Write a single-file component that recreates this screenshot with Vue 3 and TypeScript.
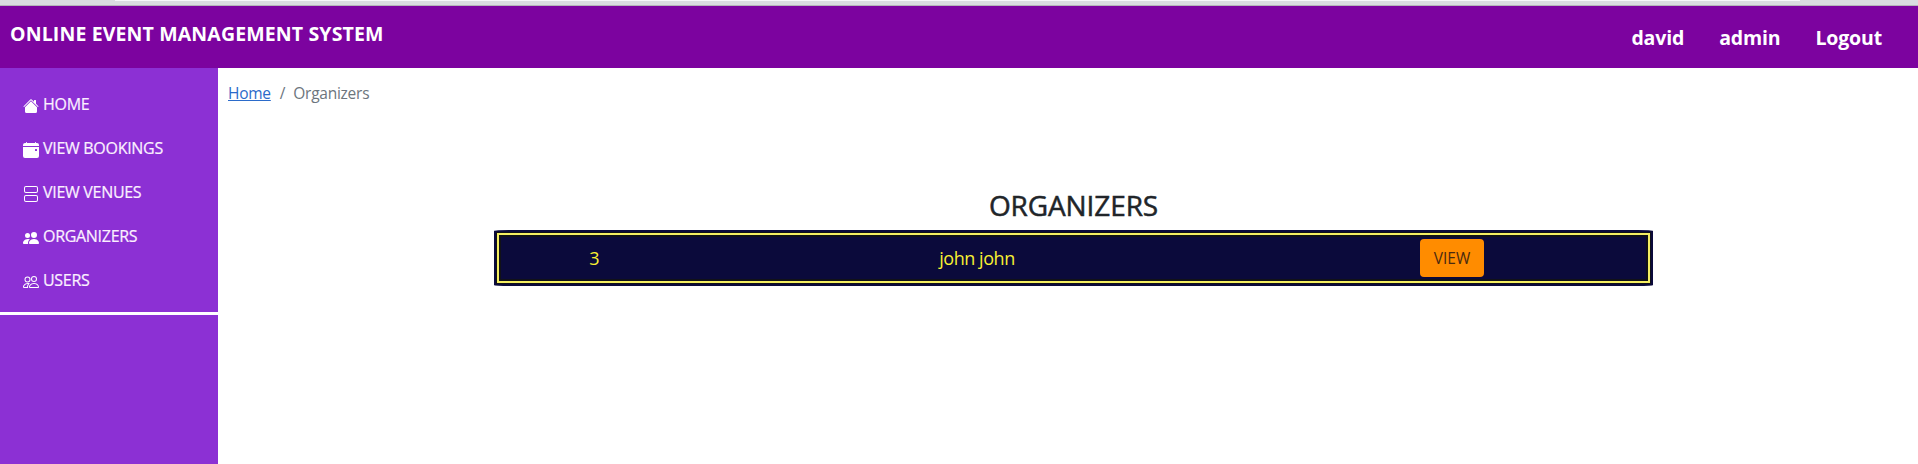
<script setup lang="ts">
interface MenuItem {
  label: string
  paths: string[]
}

const account: string[] = ['david', 'admin', 'Logout']

const menu: MenuItem[] = [
  {
    label: 'HOME',
    paths: [
      'M8.707 1.5a1 1 0 0 0-1.414 0L.646 8.146a.5.5 0 0 0 .708.708L8 2.207l6.646 6.647a.5.5 0 0 0 .708-.708L13 5.793V2.5a.5.5 0 0 0-.5-.5h-1a.5.5 0 0 0-.5.5v1.293z',
      'm8 3.293 6 6V13.500a1.500 1.500 0 0 1-1.500 1.500h-9A1.500 1.500 0 0 1 2 13.500V9.293z',
    ],
  },
  {
    label: 'VIEW BOOKINGS',
    paths: [
      'M4 .5a.5.5 0 0 0-1 0V1H2a2 2 0 0 0-2 2v1h16V3a2 2 0 0 0-2-2h-1V.5a.5.5 0 0 0-1 0V1H4zM16 14V5H0v9a2 2 0 0 0 2 2h12a2 2 0 0 0 2-2m-3.500-7h1a.5.5 0 0 1 .5.5v1a.5.5 0 0 1-.5.5h-1a.5.5 0 0 1-.5-.5v-1a.5.5 0 0 1 .5-.5',
    ],
  },
  {
    label: 'VIEW VENUES',
    paths: [
      'M3 0h10a2 2 0 0 1 2 2v3a2 2 0 0 1-2 2H3a2 2 0 0 1-2-2V2a2 2 0 0 1 2-2m0 1a1 1 0 0 0-1 1v3a1 1 0 0 0 1 1h10a1 1 0 0 0 1-1V2a1 1 0 0 0-1-1zM3 9h10a2 2 0 0 1 2 2v3a2 2 0 0 1-2 2H3a2 2 0 0 1-2-2v-3a2 2 0 0 1 2-2m0 1a1 1 0 0 0-1 1v3a1 1 0 0 0 1 1h10a1 1 0 0 0 1-1v-3a1 1 0 0 0-1-1z',
    ],
  },
  {
    label: 'ORGANIZERS',
    paths: [
      'M7 14s-1 0-1-1 1-4 5-4 5 3 5 4-1 1-1 1zm4-6a3 3 0 1 0 0-6 3 3 0 0 0 0 6',
      'M5.216 14A2.240 2.240 0 0 1 5 13c0-1.355.680-2.750 1.936-3.720A6.300 6.300 0 0 0 5 9c-4 0-5 3-5 4s1 1 1 1z',
      'M4.500 8a2.500 2.500 0 1 0 0-5 2.500 2.500 0 0 0 0 5',
    ],
  },
  {
    label: 'USERS',
    paths: [
      'M15 14s1 0 1-1-1-4-5-4-5 3-5 4 1 1 1 1zm-7.978-1L7 12.996c.001-.264.167-1.030.760-1.720C8.312 10.629 9.282 10 11 10c1.717 0 2.687.630 3.240 1.276.593.690.758 1.457.760 1.720l-.022.004zM11 7a2 2 0 1 0 0-4 2 2 0 0 0 0 4m3-2a3 3 0 1 1-6 0 3 3 0 0 1 6 0',
      'M6.936 9.280a6 6 0 0 0-1.230-.247A7 7 0 0 0 5 9c-4 0-5 3-5 4q0 1 1 1h4.216A2.240 2.240 0 0 1 5 13c0-1.010.377-2.042 1.090-2.904.243-.294.526-.569.846-.816M4.920 10A5.500 5.500 0 0 0 4 13H1c0-.260.164-1.030.760-1.724.545-.636 1.492-1.256 3.160-1.275zM1.500 5.500a3 3 0 1 1 6 0 3 3 0 0 1-6 0m3-2a2 2 0 1 0 0 4 2 2 0 0 0 0-4',
    ],
  },
]

const organizers = [{ id: 3, name: 'john john' }]
</script>

<template>
  <div class="page">
    <div class="chrome"><div class="address"></div></div>
    <header class="topbar">
      <div class="brand">ONLINE EVENT MANAGEMENT SYSTEM</div>
      <nav class="account">
        <a v-for="entry in account" :key="entry">{{ entry }}</a>
      </nav>
    </header>
    <div class="body">
      <aside class="sidebar">
        <ul class="menu">
          <li v-for="item in menu" :key="item.label">
            <svg viewBox="0 0 16 16" fill="currentColor">
              <path v-for="(d, i) in item.paths" :key="i" :d="d" fill-rule="evenodd" />
            </svg>
            <span>{{ item.label }}</span>
          </li>
        </ul>
      </aside>
      <main class="content">
        <nav class="breadcrumb">
          <a class="home">Home</a><span class="slash">/</span><span class="current">Organizers</span>
        </nav>
        <section class="panel">
          <h3>ORGANIZERS</h3>
          <div v-for="row in organizers" :key="row.id" class="frame">
            <div class="row">
              <div class="id">{{ row.id }}</div>
              <div class="name">{{ row.name }}</div>
              <div class="action"><button>VIEW</button></div>
            </div>
          </div>
        </section>
      </main>
    </div>
  </div>
</template>

<style>
body {
  margin: 0;
  overflow: hidden;
}
</style>

<style scoped>
* {
  box-sizing: border-box;
}
.page {
  height: 464px;
  display: flex;
  flex-direction: column;
  background: #fff;
  font-family: 'Open Sans', 'Noto Sans', sans-serif;
  white-space: nowrap;
}
.chrome {
  height: 6px;
  background: #dadce0;
  border-bottom: 1px solid #b4b5b9;
}
.address {
  height: 1px;
  margin: 0 118px 0 115px;
  background: #f6f7f9;
}
.topbar {
  height: 62px;
  display: flex;
  justify-content: space-between;
  background: #7c039f;
  color: #fff;
  font-weight: 700;
}
.brand {
  padding: 13px 0 0 10px;
  line-height: 30px;
  font-size: 19.5px;
  letter-spacing: 0.14px;
}
.account {
  display: flex;
  padding: 17px 36px 0 0;
  gap: 35px;
  line-height: 30px;
  font-size: 19.5px;
  letter-spacing: -0.15px;
}
.body {
  flex: 1;
  display: flex;
}
.sidebar {
  width: 218px;
  background: #8c30d4;
}
.menu {
  height: 247px;
  margin: 0;
  padding: 14px 0 0 23px;
  border-bottom: 3px solid #fff;
  list-style: none;
}
.menu li {
  height: 44px;
  display: flex;
  align-items: center;
  color: #fbf0ff;
  font-size: 16px;
  letter-spacing: -0.3px;
  -webkit-text-stroke: 0.2px #fbf0ff;
}
.menu svg {
  width: 16px;
  height: 16px;
  margin: 3px 4px 0 0;
  color: #fff;
}
.content {
  flex: 1;
  display: flex;
  flex-direction: column;
}
.breadcrumb {
  display: flex;
  padding: 13px 0 0 10px;
  line-height: 24px;
  font-size: 15.5px;
  letter-spacing: -0.25px;
  color: #6c757d;
}
.home {
  color: #2b6bca;
  text-decoration: underline;
}
.slash {
  margin: 0 8px 0 9px;
}
.panel {
  width: 1159px;
  margin: 85px 0 0 276px;
}
h3 {
  margin: 0;
  height: 40px;
  line-height: 30px;
  text-align: center;
  font-size: 28px;
  font-weight: 500;
  letter-spacing: -0.1px;
  color: #212529;
  -webkit-text-stroke: 0.5px #212529;
}
.frame {
  height: 56px;
  padding: 3px;
  background: #0b0a3b;
  border-radius: 15px / 1px;
}
.row {
  height: 50px;
  display: grid;
  grid-template-columns: 191px 574px 1fr;
  align-items: center;
  background: #0b0a3b;
  border: 2px solid #f5ef62;
  box-shadow: inset 0 0 0 2px #111118, 0 0 0 1px #111118;
  color: #f8f032;
  font-size: 18px;
}
.id {
  text-align: center;
}
.name {
  text-align: center;
  letter-spacing: -0.45px;
}
.action {
  padding-left: 156px;
}
button {
  display: block;
  width: 64px;
  height: 38px;
  padding: 0;
  border: 0;
  border-radius: 4px;
  background: #ff8c00;
  color: #4a2a10;
  font: 15.5px 'Open Sans', 'Noto Sans', sans-serif;
}
</style>
